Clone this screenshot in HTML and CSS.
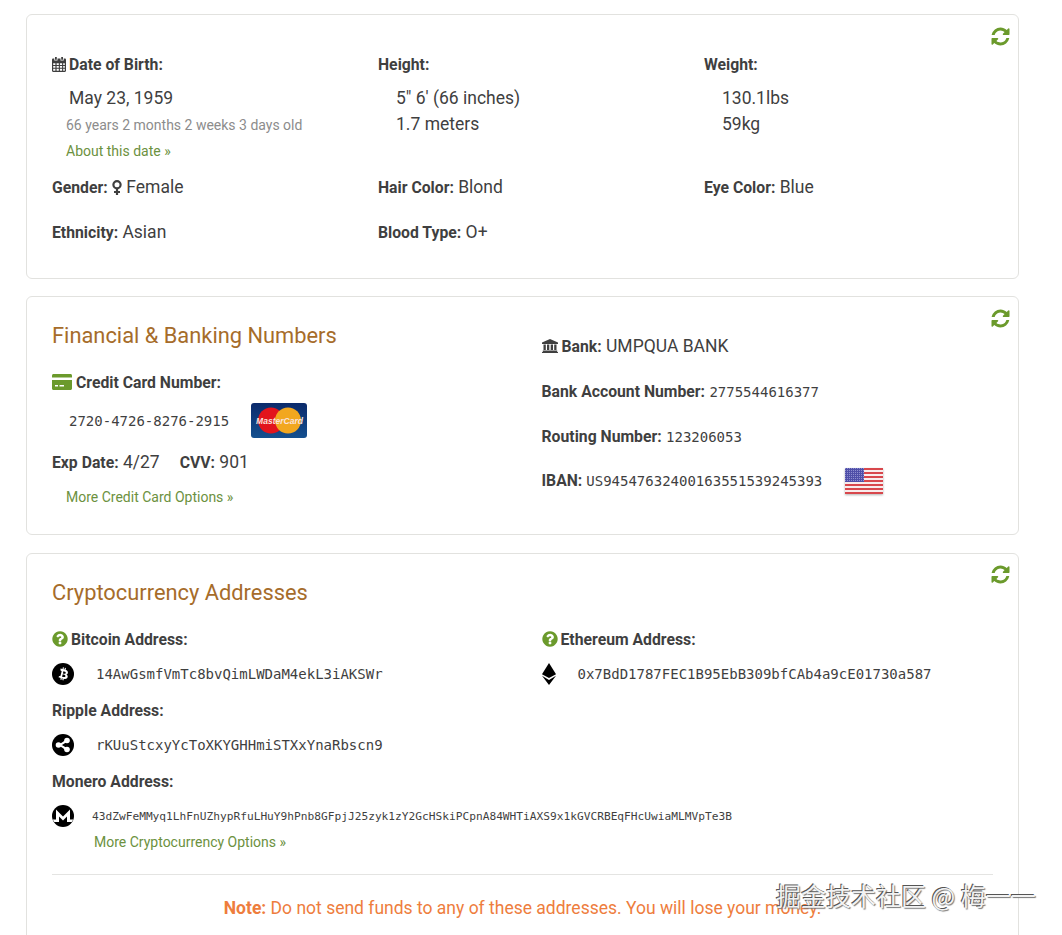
FILE: index.html
```html
<!DOCTYPE html>
<html lang="en">
<head>
<meta charset="utf-8">
<title>Profile</title>
<link rel="stylesheet" href="styles.css">
</head>
<body>
<svg class="defs" aria-hidden="true">
  <symbol id="refresh" viewBox="0 0 1792 1792"><path d="M1639 1056q0 5-1 7-64 268-268 434.500t-478 166.500q-146 0-282.500-55t-243.500-157l-129 129q-19 19-45 19t-45-19-19-45v-448q0-26 19-45t45-19h448q26 0 45 19t19 45-19 45l-137 137q71 66 161 102t187 36q134 0 250-65t186-179q11-17 53-117 8-23 30-23h192q13 0 22.500 9.500t9.500 22.500zm25-800v448q0 26-19 45t-45 19h-448q-26 0-45-19t-19-45 19-45l138-138q-148-137-349-137-134 0-250 65t-186 179q-11 17-53 117-8 23-30 23h-199q-13 0-22.500-9.500t-9.500-22.500v-7q65-268 270-434.500t480-166.500q146 0 284 55.500t245 156.500l130-129q19-19 45-19t45 19 19 45z"/></symbol>
  <symbol id="question" viewBox="0 0 1792 1792"><path d="M1024 1376v-192q0-14-9-23t-23-9h-192q-14 0-23 9t-9 23v192q0 14 9 23t23 9h192q14 0 23-9t9-23zm256-672q0-88-55.500-163t-138.500-116-170-41q-243 0-371 213-15 24 8 42l132 100q7 6 19 6 16 0 25-12 53-68 86-92 34-24 86-24 48 0 85.500 26t37.500 59q0 38-20 61t-68 45q-63 28-115.500 86.500t-52.500 125.500v36q0 14 9 23t23 9h192q14 0 23-9t9-23q0-19 21.500-49.500t54.500-49.500q32-18 49-28.500t46-35 44.500-48 28-60.500 12.500-81zm384 192q0 209-103 385.500t-279.500 279.500-385.500 103-385.500-103-279.500-279.500-103-385.500 103-385.500 279.500-279.500 385.500-103 385.500 103 279.500 279.500 103 385.500z"/></symbol>
</svg>
<div class="page">

<section class="card card-bio">
  <svg class="refresh"><use href="#refresh"/></svg>
  <div class="bio-grid">
    <div>
      <div class="label"><svg class="ico ico-cal" viewBox="0 0 14 15"><path d="M3 0h1.800v2.800H3zM9.200 0H11v2.800H9.200z"/><path fill-rule="evenodd" d="M1.200 1.500H2.300v2h3.200v-2h3v2h3.200v-2h1.100C13.500 1.500 14 2 14 2.700v11.100c0 .7-.5 1.200-1.200 1.200H1.200C.5 15 0 14.500 0 13.800V2.700C0 2 .5 1.500 1.200 1.500zM1.200 6.200v1.800h2.200V6.200zm3.400 0v1.800h2.200V6.200zm3.300 0v1.800h2.200V6.200zm3.300 0v1.800h1.600V6.200zM1.200 9v1.800h2.200V9zm3.400 0v1.800h2.200V9zm3.300 0v1.800h2.200V9zm3.300 0v1.800h1.600V9zM1.200 11.800v2h2.200v-2zm3.400 0v2h2.200v-2zm3.300 0v2h2.200v-2zm3.300 0v2h1.600v-2z"/></svg>Date of Birth:</div>
      <div class="lines">
        <div class="val indent-date">May 23, 1959</div>
        <div class="age">66 years 2 months 2 weeks 3 days old</div>
        <a class="more more-date">About this date »</a>
      </div>
    </div>
    <div>
      <div class="label">Height:</div>
      <div class="lines">
        <div class="val indent-metric">5" 6' (66 inches)</div>
        <div class="val indent-metric">1.7 meters</div>
      </div>
    </div>
    <div>
      <div class="label">Weight:</div>
      <div class="lines">
        <div class="val indent-metric">130.1lbs</div>
        <div class="val indent-metric">59kg</div>
      </div>
    </div>
    <div class="pair"><b>Gender:</b> <svg class="ico ico-venus" viewBox="0 0 10 15"><circle cx="5" cy="4.800" r="3.600"/><path d="M5 8.400V15M2 12h6"/></svg> Female</div>
    <div class="pair"><b>Hair Color:</b> Blond</div>
    <div class="pair"><b>Eye Color:</b> Blue</div>
    <div class="pair"><b>Ethnicity:</b> Asian</div>
    <div class="pair"><b>Blood Type:</b> O+</div>
  </div>
</section>

<section class="card card-fin">
  <svg class="refresh"><use href="#refresh"/></svg>
  <div class="two-col">
    <div>
      <h2 class="title">Financial &amp; Banking Numbers</h2>
      <div class="label label-cc"><svg class="ico ico-cc" viewBox="0 0 20 16"><path d="M1.500 0h17C19.300 0 20 .7 20 1.500V3.500H0V1.500C0 .7.700 0 1.500 0z"/><path d="M0 6h20v8.500c0 .8-.7 1.500-1.500 1.500h-17C.7 16 0 15.300 0 14.500zM3 11v1.500h3V11zm4.500 0v1.500h4.500V11z" fill-rule="evenodd"/></svg>Credit Card Number:</div>
      <div class="cc-row">
        <span class="mono">2720-4726-8276-2915</span>
        <svg class="mc" viewBox="0 0 56 35">
          <defs><linearGradient id="mcbg" x1="0" y1="0" x2="0" y2="1"><stop offset="0" stop-color="#0b2a6b"/><stop offset="1" stop-color="#14508f"/></linearGradient></defs>
          <rect width="56" height="35" rx="3" fill="url(#mcbg)"/>
          <circle cx="20" cy="17.500" r="13" fill="#e2141c"/>
          <circle cx="37" cy="17.500" r="13" fill="#f2a71f"/>
          <text class="mc-text" x="28.500" y="20.500">MasterCard</text>
        </svg>
      </div>
      <div class="exp-row"><span class="pair"><b>Exp Date:</b> 4/27</span><span class="pair"><b>CVV:</b> 901</span></div>
      <a class="more more-cc">More Credit Card Options »</a>
    </div>
    <div class="bank-col">
      <div class="pair"><svg class="ico ico-bank" viewBox="0 0 16 14"><path d="M8 0l8 3.500V5H0V3.500zM1.500 5.600h2.300v5.400H1.500zM5 5.600h2.300v5.400H5zM8.700 5.600H11v5.400H8.700zM12.200 5.600h2.300v5.400h-2.300zM.8 11.500h14.400V13H.8zM0 13h16v1H0z"/></svg><b>Bank:</b> UMPQUA BANK</div>
      <div class="pair"><b>Bank Account Number:</b> <span class="mono-sm">2775544616377</span></div>
      <div class="pair"><b>Routing Number:</b> <span class="mono-sm">123206053</span></div>
      <div class="pair iban"><b>IBAN:</b> <span class="mono-sm">US94547632400163551539245393</span>
        <svg class="flag" viewBox="0 0 38 26">
          <defs><pattern id="stars" width="2" height="2" patternUnits="userSpaceOnUse"><rect width="2" height="2" fill="#4f4fa8"/><rect width="1" height="1" fill="#8e8ecf"/></pattern></defs>
          <rect width="38" height="26" rx="1.500" fill="#f8ecec"/>
          <path class="stripe" d="M0 1h38M0 5h38M0 9h38M0 13h38M0 17h38M0 21h38M0 25h38"/>
          <rect width="19" height="14" fill="url(#stars)"/>
        </svg>
      </div>
    </div>
  </div>
</section>

<section class="card card-crypto">
  <svg class="refresh"><use href="#refresh"/></svg>
  <h2 class="title">Cryptocurrency Addresses</h2>
  <div class="two-col crypto-top">
    <div>
      <div class="label"><svg class="ico ico-q"><use href="#question"/></svg>Bitcoin Address:</div>
      <div class="addr">
        <svg class="coin" viewBox="0 0 22 22"><circle cx="11" cy="11" r="11"/><path class="coin-w" fill-rule="evenodd" d="M8.500 5.500l2 .5.400-1.700 1.100.3-.4 1.600.9.2.4-1.600 1.100.3-.4 1.700c1.500.6 2.500 1.500 2.300 2.900-.2 1-.7 1.500-1.500 1.700 1.100.6 1.600 1.500 1.200 2.800-.5 1.700-1.900 1.900-3.800 1.500l-.4 1.700-1.100-.3.4-1.600-.9-.2-.4 1.600-1.100-.3.4-1.700-2.200-.6.600-1.300c.8.200 1.200.3 1.400-.2l1.100-4.300c.1-.5-.3-.8-1.100-1zM10.700 11.300l-.6 2.400c1 .3 3 .7 3.300-.5.300-1.300-1.700-1.600-2.700-1.900zM11.400 8.300l-.5 2.200c.8.200 2.500.5 2.800-.6.300-1.200-1.500-1.400-2.300-1.600z"/></svg>
        <span class="mono">14AwGsmfVmTc8bvQimLWDaM4ekL3iAKSWr</span>
      </div>
    </div>
    <div>
      <div class="label"><svg class="ico ico-q"><use href="#question"/></svg>Ethereum Address:</div>
      <div class="addr addr-eth">
        <svg class="coin coin-eth" viewBox="0 0 14 22"><path d="M7 0l7 11.200L7 15 0 11.200z"/><path d="M0 12.800L7 17l7-4.200L7 22z"/></svg>
        <span class="mono">0x7BdD1787FEC1B95EbB309bfCAb4a9cE01730a587</span>
      </div>
    </div>
  </div>
  <div class="label label-next">Ripple Address:</div>
  <div class="addr">
    <svg class="coin" viewBox="0 0 22 22"><circle cx="11" cy="11" r="11"/><g class="coin-w"><path class="ripple-line" d="M6.500 11C10 11 11 8.500 15 6.500M6.500 11C10 11 11 13.500 15 15.500"/><circle cx="6.500" cy="11" r="2.800"/><circle cx="15" cy="6.500" r="2.800"/><circle cx="15" cy="15.500" r="2.800"/></g></svg>
    <span class="mono">rKUuStcxyYcToXKYGHHmiSTXxYnaRbscn9</span>
  </div>
  <div class="label label-next">Monero Address:</div>
  <div class="addr addr-xmr">
    <svg class="coin" viewBox="0 0 22 22"><circle cx="11" cy="11" r="11"/><path class="coin-w" d="M4 4.500l7 7 7-7v10h3.300c-.5 1-1 1.800-1.600 2.500H15v-5.500l-4 4-4-4V17H2.300C1.700 16.300 1.200 15.500.7 14.500H4z"/></svg>
    <span class="mono-xs">43dZwFeMMyq1LhFnUZhypRfuLHuY9hPnb8GFpjJ25zyk1zY2GcHSkiPCpnA84WHTiAXS9x1kGVCRBEqFHcUwiaMLMVpTe3B</span>
  </div>
  <a class="more more-crypto">More Cryptocurrency Options »</a>
  <hr class="rule">
  <p class="note"><b>Note:</b> Do not send funds to any of these addresses. You will lose your money.</p>
</section>

<div class="watermark">掘金技术社区 @ 梅一一</div>
</div>
</body>
</html>
```

FILE: styles.css
```css
* { box-sizing: border-box; }
html, body { margin: 0; padding: 0; background: #fff; }
body {
  font-family: Roboto, "Liberation Sans", sans-serif;
  font-size: 17.5px;
  color: #3f3f3f;
}
.defs { display: none; }
.page {
  position: relative;
  width: 1062px;
  height: 935px;
  overflow: hidden;
  padding: 14px 43px 0 26px;
}
.card {
  position: relative;
  border: 1px solid #e2e2df;
  border-radius: 6px;
  padding: 0 25px;
  background: #fff;
}
.card-bio { height: 265px; padding-top: 40px; margin-bottom: 17px; }
.card-fin { height: 239px; padding-top: 24px; margin-bottom: 18px; }
.card-crypto { height: 500px; padding-top: 24px; }
.refresh {
  position: absolute;
  right: 7px;
  top: 11px;
  width: 21px;
  height: 21px;
  fill: #6b9a2c;
}
.card-crypto .refresh { top: 10px; }
.label {
  font-size: 15.750px;
  font-weight: 700;
  line-height: 20px;
  color: #3f3f3f;
}
.ico { display: inline-block; vertical-align: -2px; }
.ico-cal { width: 14px; height: 15px; margin-right: 3px; fill: #3f3f3f; }
.ico-venus { width: 10px; height: 15px; fill: none; stroke: #3f3f3f; stroke-width: 2.200; }
.ico-cc { width: 20px; height: 16px; margin-right: 4px; fill: #6b9a2c; }
.ico-bank { width: 16px; height: 14px; margin-right: 4px; fill: #3f3f3f; vertical-align: -1px; }
.ico-q { width: 18px; height: 18px; margin: 0 2px 0 -1px; fill: #6b9a2c; vertical-align: -3px; }

.bio-grid {
  display: grid;
  grid-template-columns: repeat(3, 326px);
  grid-template-rows: 109px 26px 26px;
  row-gap: 10px;
}
.bio-grid > .pair:nth-child(n+7) { margin-top: 9px; }
.lines { margin-top: 10px; line-height: 26px; }
.val { font-size: 17.500px; line-height: 26px; }
.indent-date { padding-left: 17px; }
.indent-metric { padding-left: 18px; }
.age { font-size: 14px; line-height: 26px; margin-top: 1px; color: #8c8c8c; padding-left: 14px; }
.more {
  display: block;
  font-size: 14px;
  line-height: 26px;
  color: #6c9140;
}
.more-date { padding-left: 14px; }
.pair { font-size: 17.500px; line-height: 26px; }
.pair b { font-size: 15.750px; font-weight: 700; }

.two-col {
  display: grid;
  grid-template-columns: 489.500px 1fr;
}
.title {
  margin: 0;
  font-size: 21.850px;
  font-weight: 400;
  line-height: 30px;
  color: #a66c2a;
}
.label-cc { margin-top: 22px; }
.cc-row {
  display: flex;
  align-items: center;
  height: 35px;
  margin-top: 10px;
  padding-left: 17px;
}
.mono {
  font-family: "DejaVu Sans Mono", "Liberation Mono", monospace;
  font-size: 14px;
  color: #3f3f3f;
}
.mono-sm {
  font-family: "DejaVu Sans Mono", "Liberation Mono", monospace;
  font-size: 14px;
  line-height: 1;
  color: #3f3f3f;
}
.mono-xs {
  font-family: "DejaVu Sans Mono", "Liberation Mono", monospace;
  font-size: 11.200px;
  color: #3f3f3f;
}
.mc { width: 56px; height: 35px; margin-left: 22px; }
.mc-text {
  font-family: "Liberation Sans", sans-serif;
  font-size: 8.500px;
  font-weight: 700;
  font-style: italic;
  fill: #fbe3dc;
  text-anchor: middle;
}
.exp-row { display: flex; gap: 20px; margin-top: 11px; }
.more-cc { margin-top: 8px; padding-left: 14px; }

.bank-col { display: flex; flex-direction: column; gap: 18px; padding-top: 12px; }
.iban { display: flex; align-items: center; gap: 4px; }
.flag {
  width: 38px;
  height: 26px;
  margin-left: 19px;
  filter: drop-shadow(0 1px 1px rgba(0, 0, 0, .3));
}
.stripe { stroke: #d8474c; stroke-width: 2; fill: none; }

.crypto-top { margin-top: 22px; }
.addr {
  display: flex;
  align-items: center;
  gap: 22px;
  height: 24px;
  margin-top: 12px;
}
.addr-xmr { gap: 18px; }
.coin { width: 22px; height: 22px; fill: #000; flex: none; }
.coin-eth { width: 14px; }
.coin-w { fill: #fff; }
.ripple-line { fill: none; stroke: #fff; stroke-width: 2; }
.label-next { margin-top: 15px; }
.more-crypto { padding-left: 42px; margin-top: 1px; }
.rule { border: 0; border-top: 1px solid #e4e4e2; margin: 19px 0 0; }
.note {
  margin: 20px 0 0;
  text-align: center;
  font-size: 17.500px;
  line-height: 26px;
  color: #ee7d3d;
}
.note b { font-weight: 700; }
.watermark {
  position: absolute;
  left: 776px;
  top: 880px;
  font-family: "Noto Sans CJK SC", "Liberation Sans", sans-serif;
  font-size: 25px;
  line-height: 30px;
  white-space: nowrap;
  color: #f2f2f2;
  text-shadow: -1px -1px 0 #555, 1px 1px 1px #777;
}
```
